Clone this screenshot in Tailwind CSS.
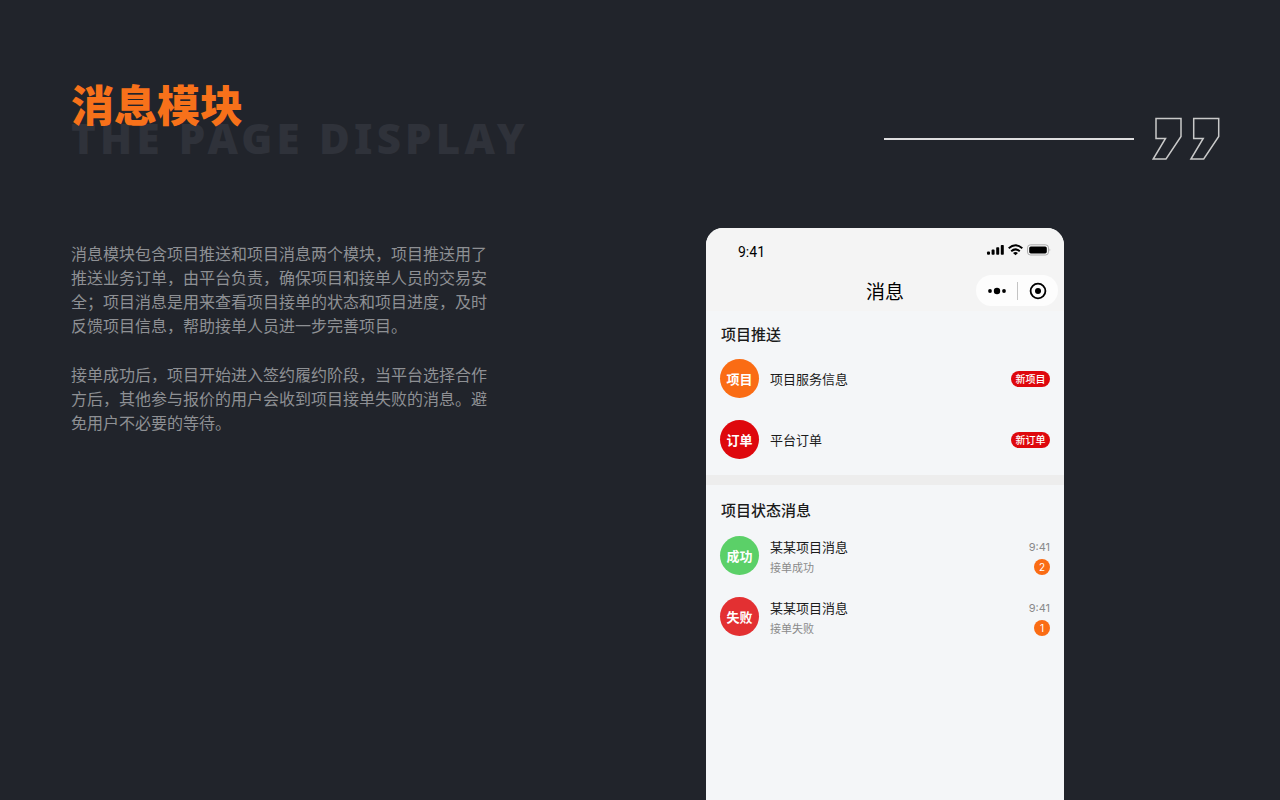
<!DOCTYPE html>
<html lang="zh-CN">
<head>
<meta charset="utf-8">
<meta name="viewport" content="width=device-width, initial-scale=1">
<title>消息模块</title>
<script src="https://cdn.jsdelivr.net/npm/@tailwindcss/browser@4"></script>
</head>
<body class="flex min-h-screen flex-col bg-[#21242b] font-['Noto_Sans_CJK_SC',sans-serif]">
  <header class="flex items-end justify-between pt-[81px] pr-[59px] pl-[71px]">
    <div class="pb-[10px]">
      <h1 class="relative z-10 text-[43px] leading-[44px] font-black text-[#f7711a]">消息模块</h1>
      <p class="mt-px font-['Noto_Sans',sans-serif] text-[42px] leading-[24px] font-black tracking-widest whitespace-nowrap text-[#2f323a]">THE PAGE DISPLAY</p>
    </div>
    <div class="flex items-center gap-[18px]">
      <div class="h-[2px] w-[250px] bg-[#dededf]"></div>
      <svg class="h-[43px] w-[69px]" viewBox="0 0 69 43" fill="none" stroke="#c9c9c9" stroke-width="1.5" aria-hidden="true">
        <path d="M4 1.500H29V19.500L14 42H1.200L13.500 21.500H4Z"/>
        <path d="M41.700 1.500H66.700V19.500L51.700 42H38.900L51.200 21.500H41.700Z"/>
      </svg>
    </div>
  </header>

  <main class="flex grow items-stretch justify-between pt-[68px] pr-[216px] pl-[71px]">
    <section class="flex max-w-[420px] flex-col gap-[25px] pt-[13px] text-[16px] leading-[24px] text-[#8e9094]">
      <p>消息模块包含项目推送和项目消息两个模块，项目推送用了推送业务订单，由平台负责，确保项目和接单人员的交易安全；项目消息是用来查看项目接单的状态和项目进度，及时反馈项目信息，帮助接单人员进一步完善项目。</p>
      <p>接单成功后，项目开始进入签约履约阶段，当平台选择合作方后，其他参与报价的用户会收到项目接单失败的消息。避免用户不必要的等待。</p>
    </section>

    <section class="w-[358px] shrink-0 overflow-hidden rounded-t-[17px] bg-[#f4f6f8] text-[#1b1b1b]">
      <div class="bg-[#f4f4f4] pb-[5px]">
        <div class="flex h-[47px] items-center justify-between pr-[13px] pl-[32px]">
          <span class="font-[Roboto,sans-serif] text-[14px] leading-[20px] text-black">9:41</span>
          <svg class="mb-1 h-[12px] w-[65px]" viewBox="0 0 65 12" aria-hidden="true">
            <g fill="#000">
              <rect x="1" y="7.6" width="3" height="3.2" rx="1"/>
              <rect x="5.6" y="5.6" width="3" height="5.2" rx=".8"/>
              <rect x="10.2" y="3.3" width="3" height="7.5" rx=".8"/>
              <rect x="14.8" y="1" width="3" height="9.8" rx=".8"/>
            </g>
            <g fill="none" stroke="#000" stroke-width="2">
              <path d="M22.700 4.200Q29.500 -1.600 36.300 4.200"/>
              <path d="M25.200 7.200Q29.500 3.600 33.800 7.200"/>
            </g>
            <path d="M27 9Q29.500 7.200 32 9L29.500 11.200Z" fill="#000"/>
            <rect x="41.500" y=".8" width="21" height="10.200" rx="3" fill="none" stroke="#a5a5a5" stroke-width=".9"/>
            <rect x="43.200" y="2.400" width="17.600" height="7" rx="1.600" fill="#000"/>
            <path d="M63.600 4.200Q65 5.900 63.600 7.600Z" fill="#999"/>
          </svg>
        </div>
        <div class="grid grid-cols-[1fr_auto_1fr] items-center pr-[6px] pl-[6px]">
          <h2 class="col-start-2 text-[19px] leading-[28px] text-black">消息</h2>
          <div class="flex h-[31px] w-[82px] items-center justify-self-end rounded-full bg-[#fdfdfd]">
            <button type="button" aria-label="更多" class="flex h-full w-[41px] items-center justify-center">
              <svg class="h-[8px] w-[20px]" viewBox="0 0 20 8" aria-hidden="true"><circle cx="3" cy="4" r="1.900"/><circle cx="10" cy="4" r="3.200"/><circle cx="17" cy="4" r="1.900"/></svg>
            </button>
            <span class="h-[18px] w-px bg-[#c4c4c4]"></span>
            <button type="button" aria-label="关闭" class="flex h-full w-[40px] items-center justify-center">
              <svg class="h-[18px] w-[18px]" viewBox="0 0 18 18" aria-hidden="true"><circle cx="9" cy="9" r="7.400" fill="none" stroke="#000" stroke-width="1.800"/><circle cx="9" cy="9" r="3"/></svg>
            </button>
          </div>
        </div>
      </div>

      <div class="px-[14px] pt-[12px] pb-[16px]">
        <h3 class="px-px text-[15px] leading-[22px] font-medium">项目推送</h3>
        <ul class="mt-[14px] flex flex-col gap-[22px]">
          <li><a href="#project" class="flex items-center gap-[11px]">
            <span class="flex size-[39px] items-center justify-center rounded-full bg-[#fa6c14] text-[13px] font-bold text-white">项目</span>
            <span class="grow text-[13px] leading-[20px]">项目服务信息</span>
            <span class="flex h-[16px] w-[39px] items-center justify-center rounded-full bg-[#de080d] text-[10px] leading-[16px] font-medium text-white">新项目</span>
          </a></li>
          <li><a href="#order" class="flex items-center gap-[11px]">
            <span class="flex size-[39px] items-center justify-center rounded-full bg-[#de080d] text-[13px] font-bold text-white">订单</span>
            <span class="grow text-[13px] leading-[20px]">平台订单</span>
            <span class="flex h-[16px] w-[39px] items-center justify-center rounded-full bg-[#de080d] text-[10px] leading-[16px] font-medium text-white">新订单</span>
          </a></li>
        </ul>
      </div>

      <div class="h-[10px] bg-[#ededed]"></div>

      <div class="px-[14px] pt-[14px]">
        <h3 class="px-px text-[15px] leading-[22px] font-medium">项目状态消息</h3>
        <ul class="mt-[15px] flex flex-col gap-[20px]">
          <li><a href="#success" class="flex items-start gap-[11px]">
            <span class="flex size-[39px] items-center justify-center rounded-full bg-[#5bd068] text-[13px] font-bold text-white">成功</span>
            <span class="flex grow flex-col pt-px">
              <span class="text-[13px] leading-[20px]">某某项目消息</span>
              <span class="text-[11px] leading-[20px] text-[#8a8a8a]">接单成功</span>
            </span>
            <span class="flex flex-col items-end gap-[2px] pt-px font-[Inter,sans-serif]">
              <span class="text-[11px] leading-[20px] text-[#8a8a8a]">9:41</span>
              <span class="flex size-[16px] items-center justify-center rounded-full bg-[#fa6c14] text-[10px] leading-[16px] text-white">2</span>
            </span>
          </a></li>
          <li><a href="#failure" class="flex items-start gap-[11px]">
            <span class="flex size-[39px] items-center justify-center rounded-full bg-[#e33032] text-[13px] font-bold text-white">失败</span>
            <span class="flex grow flex-col pt-px">
              <span class="text-[13px] leading-[20px]">某某项目消息</span>
              <span class="text-[11px] leading-[20px] text-[#8a8a8a]">接单失败</span>
            </span>
            <span class="flex flex-col items-end gap-[2px] pt-px font-[Inter,sans-serif]">
              <span class="text-[11px] leading-[20px] text-[#8a8a8a]">9:41</span>
              <span class="flex size-[16px] items-center justify-center rounded-full bg-[#fa6c14] text-[10px] leading-[16px] text-white">1</span>
            </span>
          </a></li>
        </ul>
      </div>
    </section>
  </main>
</body>
</html>
